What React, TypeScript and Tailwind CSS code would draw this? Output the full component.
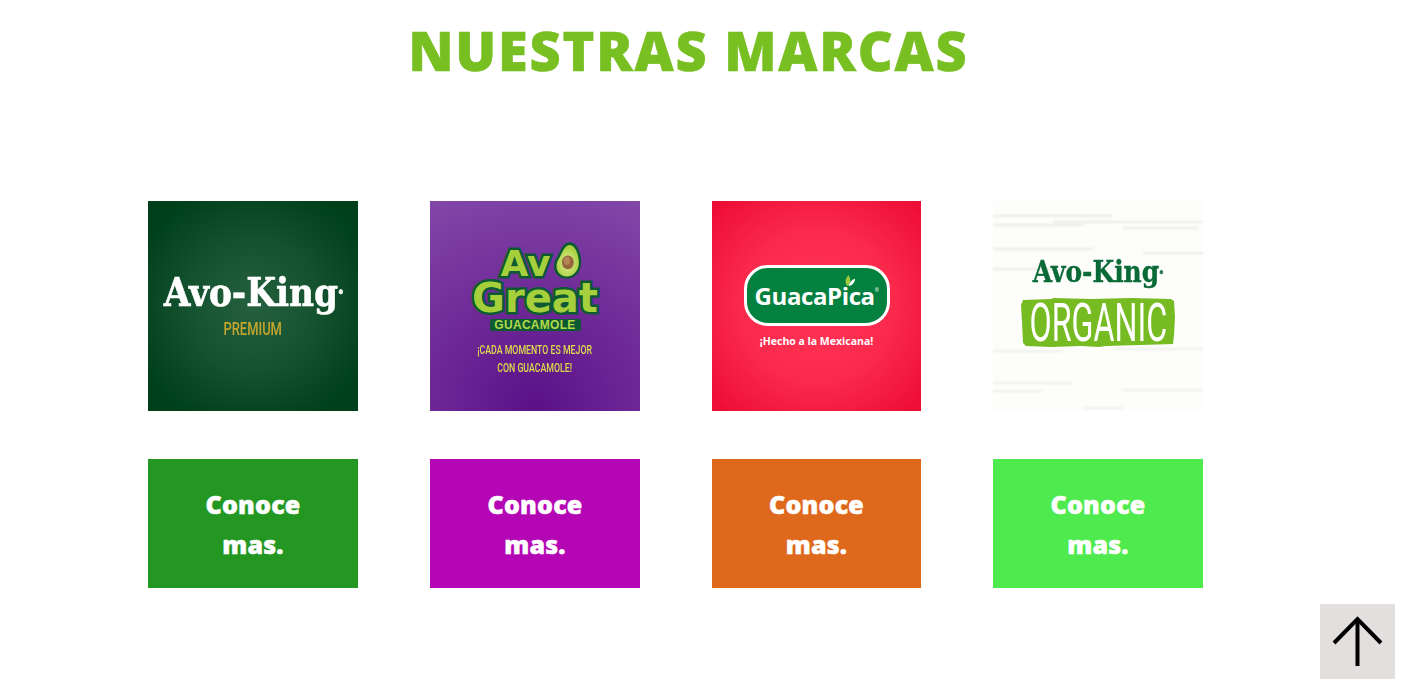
const marcas = [
  { btn: "bg-[#249723]" },
  { btn: "bg-[#b406b4]" },
  { btn: "bg-[#de681c]" },
  { btn: "bg-[#4eea4e]" },
];

function AvoKingPremium() {
  return (
    <div className="flex h-[210px] w-[210px] flex-col items-center bg-[radial-gradient(circle_at_50%_50%,#25603e_0%,#14522f_45%,#003f1b_85%)] pt-[68px]">
      <div className="scale-x-[0.86] font-['DejaVu_Serif',serif] text-[40px] font-bold leading-[46px] whitespace-nowrap text-white [-webkit-text-stroke:0.6px_#ffffff]">Avo-King<span className="align-top text-[6px] font-normal">®</span></div>
      <div className="mt-[4px] scale-x-[0.72] font-['Roboto',sans-serif] text-[18px] font-medium leading-[20px] text-[#c4a52e]">PREMIUM</div>
    </div>
  );
}

function Avocado() {
  return (
    <svg viewBox="0 0 34 42" className="h-[39px] w-[31px] shrink-0">
      <defs>
        <radialGradient id="pulpa" cx="50%" cy="58%" r="55%">
          <stop offset="0%" stopColor="#e2ec96" />
          <stop offset="100%" stopColor="#a6cf3c" />
        </radialGradient>
      </defs>
      <path d="M20 1C12 2 10 12 5 20C0 30 6 41 17 41C28 41 34 31 33 20C32 10 28 1 20 1Z" fill="#0b5a32" />
      <path d="M20 4C14 5 12 14 7.500 21C3.500 29 8 38.500 17 38.500C26 38.500 31.500 30 30.500 21C29.500 12 26 4 20 4Z" fill="url(#pulpa)" />
      <ellipse cx="18.500" cy="23" rx="6.500" ry="7.500" fill="#94643a" />
      <ellipse cx="17.500" cy="21.500" rx="3.500" ry="4.500" fill="#b38455" />
    </svg>
  );
}

function AvoGreat() {
  const letra = "font-['DejaVu_Sans',sans-serif] font-bold text-[#a6cf3c] [-webkit-text-stroke:5px_#0b5a32] [paint-order:stroke_fill]";
  return (
    <div className="flex h-[210px] w-[210px] flex-col items-center bg-[radial-gradient(circle_at_50%_100%,#5b1088_0%,#6d2896_45%,#8347a8_100%)] pt-[40px]">
      <div className="flex h-[39px] items-center pl-[12px]">
        <span className={`${letra} mt-[6px] text-[36px] leading-[33px]`}>Av</span>
        <Avocado />
      </div>
      <div className={`${letra} text-[40px] leading-[36px]`}>Great</div>
      <div className="mt-[3px] flex h-[12px] w-[91px] items-center justify-center rounded-[2px] bg-[#0b5a32] font-['Liberation_Sans',sans-serif] text-[12px] font-bold tracking-[0.3px] text-[#b3d84a]">GUACAMOLE</div>
      <div className="mt-[10px] scale-x-[0.73] text-center font-['Roboto',sans-serif] text-[12px] font-medium leading-[18px] whitespace-nowrap text-[#dcdc4c]">¡CADA MOMENTO ES MEJOR<br />CON GUACAMOLE!</div>
    </div>
  );
}

function GuacaPica() {
  return (
    <div className="flex h-[210px] w-[209px] flex-col items-center bg-[radial-gradient(circle_at_50%_50%,#ff3558_0%,#fb2a4c_50%,#ec0b33_100%)] pt-[64px]">
      <div className="relative flex h-[61px] w-[146px] items-center justify-center rounded-[24px] border-[3px] border-white bg-[#04803f] font-['Open_Sans',sans-serif] text-[24px] font-bold tracking-[-0.4px] text-white">
        GuacaPica<span className="mb-[10px] text-[5px] font-normal">®</span>
        <svg viewBox="0 0 14 14" className="absolute left-[96px] top-[6px] h-[13px] w-[13px]">
          <path d="M5 13C1 9 3 4 6 1C8 5 9 9 5 13Z" fill="#9ccb3b" />
          <path d="M6 13C7 9 9 6 13 5C13 9 10 12 6 13Z" fill="#ffffff" />
        </svg>
      </div>
      <div className="mt-[8px] font-['Open_Sans',sans-serif] text-[10.500px] font-bold leading-[14px] whitespace-nowrap text-white">¡Hecho a la Mexicana!</div>
    </div>
  );
}

function AvoKingOrganic() {
  return (
    <div className="relative flex h-[210px] w-[210px] flex-col items-center bg-[#fdfdfc] pt-[54px]">
      {/* vetas de la madera */}
      <svg viewBox="0 0 210 210" className="absolute inset-0 h-full w-full blur-[1px]">
        <g stroke="#d6d6d0" strokeWidth="1.500" fill="none">
          <path d="M0 15H120M60 21H210M0 24H90M130 27H205M0 48H100M0 68H60M150 52H210" opacity="0.7" />
          <path d="M0 150H70M120 148H210M0 182H80M130 189H210M0 190H50M90 207H130" opacity="0.5" />
        </g>
      </svg>
      <div className="relative scale-x-[0.86] font-['DejaVu_Serif',serif] text-[29px] font-bold leading-[34px] whitespace-nowrap text-[#0a6a37] [-webkit-text-stroke:0.4px_#0a6a37]">Avo-King<span className="align-top text-[5px] font-normal">®</span></div>
      <div className="relative mt-[8px] flex h-[52px] w-[154px] items-center justify-center">
        <svg viewBox="0 0 154 52" className="absolute inset-0 h-full w-full" preserveAspectRatio="none">
          <path d="M2 3L30 2L33 1L70 2L110 1L150 2L153 4L154 20L153 38L152 47L120 48L85 49L78 50L60 49L30 50L5 49L2 46L1 25L0 8Z" fill="#76bb22" />
        </svg>
        <span className="relative scale-x-[0.7] scale-y-[1.15] font-['Roboto',sans-serif] text-[46px] leading-none text-white">ORGANIC</span>
      </div>
    </div>
  );
}

function BotonConoce({ color, w }: { color: string; w: string }) {
  return (
    <div className={`flex h-[129px] ${w} items-center justify-center ${color} text-center font-['Open_Sans',sans-serif] text-[25px] font-extrabold leading-[40px] tracking-[0.2px] text-white [-webkit-text-stroke:0.5px_#ffffff]`}>
      Conoce<br />mas.
    </div>
  );
}

export default function App() {
  return (
    <div className="relative h-[685px] w-full overflow-hidden bg-white">
      <h1 className="w-[1377px] pt-[19px] text-center font-['Open_Sans',sans-serif] text-[54px] font-extrabold leading-[62px] tracking-[1.800px] text-[#78bf21] [-webkit-text-stroke:0.6px_#78bf21]">NUESTRAS MARCAS</h1>

      <div className="mt-[120px] flex gap-x-[72px] pl-[148px]">
        <div className="flex flex-col gap-y-[48px]">
          <AvoKingPremium />
          <BotonConoce color={marcas[0].btn} w="w-[210px]" />
        </div>
        <div className="flex flex-col gap-y-[48px]">
          <AvoGreat />
          <BotonConoce color={marcas[1].btn} w="w-[210px]" />
        </div>
        <div className="flex flex-col gap-y-[48px]">
          <GuacaPica />
          <BotonConoce color={marcas[2].btn} w="w-[209px]" />
        </div>
        <div className="flex flex-col gap-y-[48px]">
          <AvoKingOrganic />
          <BotonConoce color={marcas[3].btn} w="w-[210px]" />
        </div>
      </div>

      {/* volver arriba */}
      <div className="fixed left-[1320px] top-[604px] flex h-[75px] w-[75px] items-center justify-center bg-[#e4dfdf]">
        <svg viewBox="0 0 75 75" className="h-[75px] w-[75px]" fill="none" stroke="#000" strokeWidth="4">
          <path d="M14 39L37.500 15L61 39" />
          <path d="M37.500 15V62" />
        </svg>
      </div>
    </div>
  );
}
